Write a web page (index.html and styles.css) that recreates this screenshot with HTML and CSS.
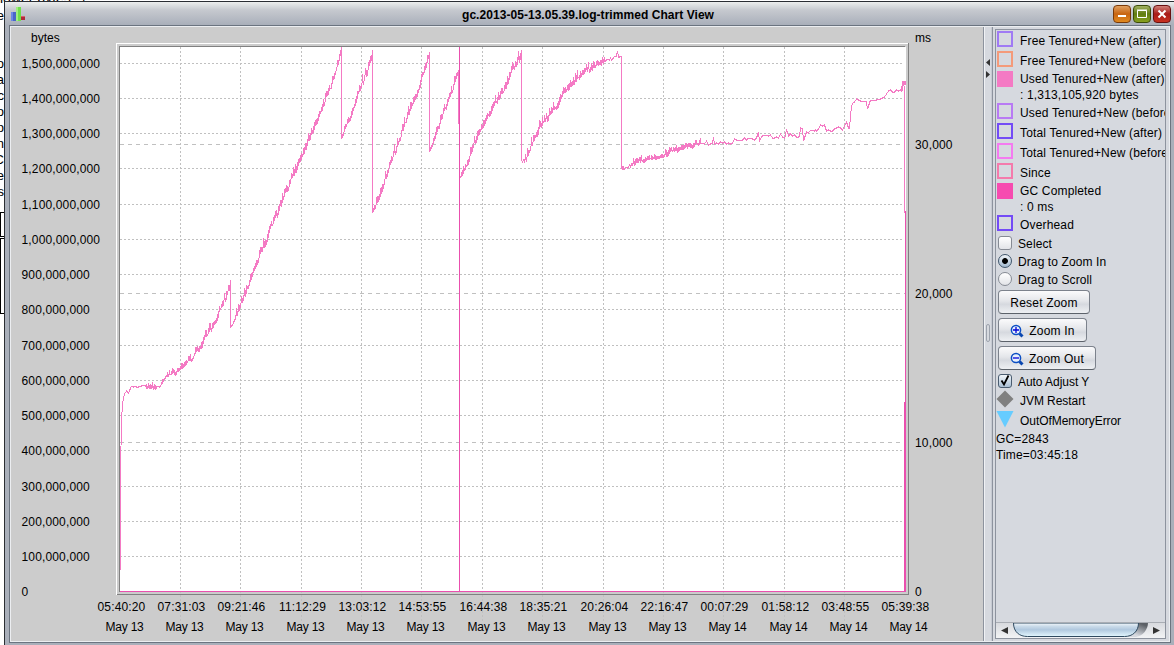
FILE: index.html
```
<!DOCTYPE html>
<html lang="en">
  <head>
    <meta charset="UTF-8">
    <title>gc.2013-05-13.05.39.log-trimmed Chart View</title>
    <link rel="stylesheet" href="styles.css">
  </head>
  <body>
    <div class="desktop">
      <div class="behind">
        <div class="behind-top">lower bytes.&nbsp; /</div>
        <div class="behind-lines">
          <span>e</span><span></span><span></span><span>o</span><span>a</span><span>c</span><span>o</span><span>p</span><span>in</span><span>C</span><span>e</span><span>s</span>
        </div>
        <div class="behind-box small"></div>
        <div class="behind-box"></div>
      </div>

      <div class="window">
        <div class="titlebar">
          <svg class="app-icon" width="16" height="16" viewBox="0 0 16 16">
            <rect x="1" y="6" width="5" height="9" fill="#4a66c8"/>
            <rect x="1" y="6" width="2" height="9" fill="#6d88e6"/>
            <rect x="6" y="1" width="5" height="14" fill="#6fe04c"/>
            <rect x="6" y="1" width="2" height="14" fill="#a0f080"/>
            <rect x="6" y="0" width="4" height="1" fill="#d9e6d4"/>
            <rect x="11" y="10" width="4" height="4" fill="#b02a3c"/>
            <rect x="11" y="10" width="4" height="1" fill="#d8606c"/>
          </svg>
          <span class="title">gc.2013-05-13.05.39.log-trimmed Chart View</span>
          <div class="window-buttons">
            <button class="win-btn minimize"><svg width="18" height="18"><rect x="5" y="10" width="8" height="2" fill="#fff"/></svg></button>
            <button class="win-btn maximize"><svg width="18" height="18"><path d="M4.500 5.500h9v7h-9z M4 5h10" fill="none" stroke="#fff"/></svg></button>
            <button class="win-btn close"><svg width="18" height="18"><path d="M5.500 5.500l7 7M12.500 5.500l-7 7" stroke="#fff" stroke-width="2"/></svg></button>
          </div>
        </div>

        <div class="content">
          <svg id="chart" class="chart" width="972" height="614" viewBox="11 27 972 614"></svg>

          <div class="splitter">
            <svg width="7" height="22"><path d="M5 1v7L1 4.500z M1 13v7l4-3.500z" fill="#333"/></svg>
            <span class="grip"></span>
          </div>

          <div class="sidebar">
            <div class="legend">
              <div class="row"><i class="swatch violet"></i><span>Free Tenured+New (after)</span></div>
              <div class="row"><i class="swatch salmon"></i><span>Free Tenured+New (before)</span></div>
              <div class="row tall"><i class="swatch used"></i><span>Used Tenured+New (after)<br>: 1,313,105,920 bytes</span></div>
              <div class="row"><i class="swatch purple"></i><span>Used Tenured+New (before)</span></div>
              <div class="row"><i class="swatch indigo"></i><span>Total Tenured+New (after)</span></div>
              <div class="row"><i class="swatch magenta"></i><span>Total Tenured+New (before)</span></div>
              <div class="row"><i class="swatch rose"></i><span>Since</span></div>
              <div class="row tall"><i class="swatch completed"></i><span>GC Completed<br>: 0 ms</span></div>
              <div class="row"><i class="swatch indigo"></i><span>Overhead</span></div>

              <div class="option"><i class="check"></i><span>Select</span></div>
              <div class="option"><i class="radio on"></i><span>Drag to Zoom In</span></div>
              <div class="option"><i class="radio"></i><span>Drag to Scroll</span></div>

              <div class="buttons">
                <button class="btn reset">Reset Zoom</button>
                <button class="btn zoom-in">
                  <svg width="14" height="14"><path d="M9.500 9.500l3 3" stroke="#0b47b0" stroke-width="3"/><circle cx="6" cy="6" r="4.600" fill="#e8f0fc" stroke="#0b4fc4" stroke-width="1.500"/><path d="M3 6h6M6 3v6" stroke="#0000d8" stroke-width="1.300"/></svg>
                  Zoom In
                </button>
                <button class="btn zoom-out">
                  <svg width="14" height="14"><path d="M9.500 9.500l3 3" stroke="#0b47b0" stroke-width="3"/><circle cx="6" cy="6" r="4.600" fill="#e8f0fc" stroke="#0b4fc4" stroke-width="1.500"/><path d="M3 6h6" stroke="#0000d8" stroke-width="1.300"/></svg>
                  Zoom Out
                </button>
              </div>

              <div class="option tight"><i class="check on"><svg width="14" height="14"><path d="M3.500 6.500l2.500 4 4.500-9" fill="none" stroke="#000" stroke-width="1.800"/></svg></i><span>Auto Adjust Y</span></div>
              <div class="row marker"><svg width="18" height="18"><path d="M9 0.500l8.500 8.500-8.500 8.500L0.500 9z" fill="#808080"/></svg><span>JVM Restart</span></div>
              <div class="row marker"><svg width="18" height="18"><path d="M0.500 1h17L9 17.500z" fill="#66ccff"/></svg><span>OutOfMemoryError</span></div>
              <div class="stat">GC=2843</div>
              <div class="stat">Time=03:45:18</div>
            </div>

            <div class="scrollbar">
              <svg width="169" height="15">
                <defs>
                  <linearGradient id="thumb" x1="0" y1="0" x2="0" y2="1">
                    <stop offset="0" stop-color="#f4f8fb"/>
                    <stop offset="0.250" stop-color="#c9dae9"/>
                    <stop offset="0.500" stop-color="#b0c8de"/>
                    <stop offset="1" stop-color="#e4f8ff"/>
                  </linearGradient>
                  <linearGradient id="shade" x1="0" y1="1" x2="0.600" y2="0">
                    <stop offset="0.300" stop-color="#d6d9df"/>
                    <stop offset="1" stop-color="#5c6066"/>
                  </linearGradient>
                </defs>
                <path d="M134 0h18c0 6-5 13-12 14h-10z" fill="url(#shade)"/>
                <path d="M17.500 0c0 9 6 13.500 14 13.500h97c8 0 14-5 14-13.500z" fill="url(#thumb)" stroke="#2f4a60"/>
                <path d="M12 4v7L5 7.500z M157 4v7l7-3.500z" fill="#333"/>
              </svg>
            </div>
          </div>
        </div>
      </div>
    </div>
    <script src="chart.js"></script>
  </body>
</html>
```

FILE: styles.css
```
:root {
  --panel: #d6d9df;
  --chart-bg: #cccccc;
  --used: #f47ac4;
  --gc: #f64bb0;
}

* {
  box-sizing: border-box;
}

body {
  margin: 0;
  font-family: "Liberation Sans", Arial, sans-serif;
  font-size: 12px;
  color: #000;
  background: #fff;
  overflow: hidden;
}

.desktop {
  position: relative;
  width: 1174px;
  height: 645px;
  padding: 1px 0 0 4px;
  overflow: hidden;
}

/* document lying behind the window */
.behind {
  position: absolute;
  left: 0;
  top: 0;
  width: 90px;
  height: 645px;
  overflow: hidden;
}

.behind-top {
  height: 8px;
  line-height: 12px;
  margin-top: -8px;
  font-size: 14px;
}

.behind-lines {
  width: 4px;
  margin-top: 8px;
  display: flex;
  flex-direction: column;
  align-items: flex-end;
  font-size: 13px;
}

.behind-lines span {
  height: 16px;
  line-height: 16px;
}

.behind-box {
  width: 20px;
  height: 76px;
  border: 1px solid #000;
}

.behind-box.small {
  height: 25px;
  margin: 12px 0 1px;
}

.window {
  position: relative;
  width: 1172px;
  height: 646px;
  border: 1px solid #2b2e33;
  background: #a9afba;
}

.titlebar {
  display: flex;
  align-items: center;
  height: 23px;
  padding: 0 4px 0 5px;
  background: linear-gradient(#eceeed, #c6c9cf 35%, #a9afba);
}

.title {
  flex: 1;
  text-align: center;
  font-weight: bold;
  letter-spacing: 0.05px;
  padding: 2px 0 0 37px;
}

.window-buttons {
  display: flex;
  gap: 2px;
}

.win-btn {
  width: 18px;
  height: 18px;
  padding: 0;
  border: 1px solid #444;
  border-radius: 4px;
}

.win-btn svg {
  display: block;
  margin: -1px;
}

.minimize {
  border-color: #7a3a08;
  background: linear-gradient(#e0a060, #c86410 50%, #e08a20);
}

.maximize {
  border-color: #3c4c08;
  background: linear-gradient(#a0b060, #607c10 50%, #88a020);
}

.close {
  border-color: #681010;
  background: linear-gradient(#d08078, #a81c18 50%, #c83020);
}

.content {
  display: flex;
  width: 1162px;
  height: 618px;
  margin-left: 4px;
  border: 1px solid #6b7480;
  box-shadow: inset 1px 1px #eceef1, inset -1px -1px #eceef1;
  padding: 1px;
  background: var(--panel);
}

.chart {
  flex: none;
  display: block;
  background: var(--chart-bg);
}

.chart text {
  font-size: 12px;
}

.chart .tick {
  letter-spacing: 0.15px;
}

.grid-line {
  stroke: #c0c0c0;
  stroke-dasharray: 2 2;
}

.grid-line.right {
  stroke-dasharray: 4 4;
}

.series {
  fill: none;
  stroke: var(--used);
}

.gc {
  fill: none;
  stroke: #ea4fae;
}

.splitter {
  width: 10px;
  flex: none;
  display: flex;
  flex-direction: column;
  align-items: center;
  border-left: 1px solid #8d939e;
  border-right: 1px solid #8d939e;
  box-shadow: inset 1px 0 #f0f2f5, inset -1px 0 #c6cad2;
  padding-top: 31px;
}

.splitter svg {
  display: block;
}

.grip {
  width: 4px;
  height: 18px;
  margin-top: 244px;
  border: 1px solid #9da3ad;
  border-radius: 2px;
}

.sidebar {
  width: 171px;
  height: 610px;
  margin: 2px 0 0 2px;
  border: 1px solid #8d939e;
  display: flex;
  flex-direction: column;
}

.legend {
  flex: 1;
  overflow: hidden;
  white-space: nowrap;
  letter-spacing: 0.16px;
}

.row {
  display: flex;
  height: 20px;
  gap: 7px;
  padding: 1px 0 0 1px;
  line-height: 20px;
}

.row.tall {
  height: 32px;
  line-height: 16px;
}

.swatch {
  flex: none;
  width: 16px;
  height: 16px;
  border: 2px solid;
}

.violet { border-color: #9f7af4; }
.salmon { border-color: #f49a7a; }
.purple { border-color: #b87af4; }
.indigo { border-color: #734bf6; }
.magenta { border-color: #f47af0; }
.rose { border-color: #f47aac; }
.used { border-color: var(--used); background: var(--used); }
.completed { border-color: var(--gc); background: var(--gc); }

.option {
  display: flex;
  align-items: center;
  height: 18px;
  gap: 6px;
  padding-left: 2px;
  letter-spacing: 0.1px;
}

.option span {
  padding-top: 2px;
}

.option.tight {
  letter-spacing: -0.05px;
}

.check,
.radio {
  width: 14px;
  height: 14px;
  border: 1px solid #868b94;
  border-radius: 3px;
  background: linear-gradient(#fff, #e2e4e8);
}

.radio {
  border-radius: 50%;
}

.check.on {
  border-color: #4a5c70;
  background: linear-gradient(#f2f6fa, #a9bfd4);
}

.check svg {
  display: block;
  margin: -1px;
}

.radio.on {
  border-color: #40566c;
  background: radial-gradient(circle, #000 0 2.5px, transparent 3.3px), linear-gradient(#f0f4f8, #a3bad0);
}

.buttons {
  display: flex;
  flex-direction: column;
  gap: 4px;
  padding: 2px 0 2px 2px;
}

.btn {
  display: flex;
  align-items: center;
  justify-content: center;
  gap: 5px;
  height: 24px;
  padding: 2px 0 0;
  border: 1px solid #7c828c;
  border-radius: 4px;
  border-bottom-color: #5c626a;
  background: linear-gradient(#fbfbfc, #e4e6ea 45%, #d6d9df 60%, #eef0f3);
  font: inherit;
  letter-spacing: 0.2px;
  color: #000;
}

.reset { width: 92px; }
.zoom-in { width: 89px; }
.zoom-out { width: 98px; }

.row.marker {
  padding: 0;
  gap: 6px;
  line-height: 22px;
  letter-spacing: -0.06px;
}

.stat {
  height: 16px;
  line-height: 18px;
}

.scrollbar {
  height: 16px;
  border-top: 1px solid #a9adb4;
  background: linear-gradient(#d8dade, #f2f3f5);
}

.scrollbar svg {
  display: block;
}
```

FILE: chart.js
```
const NS = 'http://www.w3.org/2000/svg';
const chart = document.getElementById('chart');

function add(name, attrs, text) {
  const el = document.createElementNS(NS, name);
  for (const key in attrs) el.setAttribute(key, attrs[key]);
  if (text !== undefined) el.textContent = text;
  chart.appendChild(el);
}

function line(x1, y1, x2, y2, cls) {
  add('path', { d: `M${x1} ${y1}L${x2} ${y2}`, class: cls, 'shape-rendering': 'crispEdges' });
}

function rect(x, y, width, height, fill) {
  add('rect', { x, y, width, height, fill });
}

// bevelled plot frame
rect(116, 43, 792, 1, '#fff');
rect(116, 43, 1, 552, '#fff');
rect(908, 43, 1, 552, '#808080');
rect(117, 594, 792, 1, '#808080');
rect(119, 46, 786, 1, '#808080');
rect(119, 46, 1, 546, '#808080');
rect(120, 47, 786, 545, '#fff');

// left axis
for (let i = 0; i <= 15; i++) {
  const y = Math.floor(591.7 - i * 35.23);
  if (i > 0) line(120, y + 0.5, 904, y + 0.5, 'grid-line');
  add('text', { x: 21.5, y: y + 4.5, class: 'tick' }, (i * 100000000).toLocaleString('en-US'));
}

// right axis
for (let i = 0; i <= 3; i++) {
  const y = Math.floor(591.5 - i * 149);
  if (i > 0) line(120, y + 0.5, 905, y + 0.5, 'grid-line right');
  add('text', { x: 915, y: y + 4.5, class: 'tick' }, (i * 10000).toLocaleString('en-US'));
}

// time axis
const times = ['05:40:20', '07:31:03', '09:21:46', '11:12:29', '13:03:12', '14:53:55', '16:44:38',
  '18:35:21', '20:26:04', '22:16:47', '00:07:29', '01:58:12', '03:48:55', '05:39:38'];
times.forEach((time, i) => {
  const x = Math.floor(120 + i * 60.38);
  if (i > 0 && i < 13) line(x + 0.5, 47, x + 0.5, 622, 'grid-line');
  add('text', { x: x + 1.5, y: 611, 'text-anchor': 'middle', class: 'tick' }, time);
  add('text', { x: x + 4.5, y: 631, 'text-anchor': 'middle', 'letter-spacing': -0.2 }, i < 10 ? 'May 13' : 'May 14');
});

add('text', { x: 31, y: 42 }, 'bytes');
add('text', { x: 915, y: 42 }, 'ms');

// used memory: [x, y, jitter up to the next point]
const points = [
  [120, 570, 0], [120, 470, 0], [121, 422, 0], [122, 403, 0], [124, 394, 0], [126, 391, 0], [128, 393, 0],
  [131, 386, 0.5], [138, 387, 0.5], [143, 385, 0], [145, 386, 3], [156, 387, 2], [160, 386, 3],
  [163, 381, 2], [166, 375, 3], [170, 374, 3], [176, 373, 3], [187, 362, 4], [193, 357, 4],
  [200, 347, 5], [207, 335, 5], [214, 322, 5], [220, 309, 5], [227, 293, 3], [229, 290, 0],
  [230, 280, 0], [230, 327, 2], [234, 320, 5], [240, 305, 5], [247, 287, 5], [252, 274, 5],
  [272, 225, 5], [290, 182, 5], [302, 155, 5], [320, 112, 5], [330, 88, 5], [335, 72, 4],
  [340, 54, 2], [341, 47, 0], [341, 138, 3], [346, 126, 5], [353, 108, 5], [358, 91, 5],
  [364, 78, 5], [371, 60, 2], [372, 50, 0], [372, 213, 4], [375, 208, 5], [384, 182, 5],
  [392, 160, 5], [399, 139, 5], [405, 122, 5], [412, 103, 5], [418, 90, 5], [423, 74, 4],
  [428, 58, 1], [429, 52, 0], [429, 152, 3], [432, 145, 5], [438, 127, 5], [445, 108, 5],
  [452, 92, 5], [458, 72, 0], [458, 70, 0], [459, 176, 0], [460, 177, 4], [466, 165, 5], [473, 145, 5],
  [480, 130, 5], [488, 115, 5], [496, 102, 5], [503, 92, 5], [510, 75, 5], [520, 57, 1],
  [521, 50, 0], [521, 160, 2], [524, 162, 5], [529, 150, 5], [535, 136, 5], [543, 122, 5],
  [555, 108, 5], [566, 91, 5], [578, 77, 4], [585, 70, 4], [595, 67, 4], [605, 61, 2],
  [616, 56, 0], [617, 51, 0], [618, 57, 1], [621, 56, 0], [621, 168, 3], [624, 169, 2],
  [632, 165, 4], [642, 161, 3], [650, 158, 2.5], [664, 156, 4], [672, 151, 3], [697, 144, 3],
  [712, 143, 3], [713, 137, 0], [714, 144, 3], [740, 140, 3], [756, 138, 3], [758, 132, 0],
  [759, 141, 0], [761, 137, 3], [785, 136, 0], [786, 129, 0], [788, 136, 3], [799, 136, 0],
  [800, 128, 0], [802, 129, 0], [803, 141, 0], [806, 132, 2], [815, 130, 3], [824, 125, 0],
  [826, 131, 2.5], [843, 128, 0], [846, 122, 0], [848, 128, 0], [849, 128, 0], [851, 106, 2],
  [853, 102, 2], [856, 99, 1], [866, 102, 0], [867, 109, 0], [870, 100, 3], [882, 98, 3],
  [888, 91, 2], [901, 91, 0], [902, 82, 0], [902, 91, 0], [903, 82, 0], [904, 90, 0], [904, 213, 0]
];

let seed = 7;
function random() {
  seed = (seed * 16807) % 2147483647;
  return seed / 2147483647 - 0.5;
}

let d = '';
points.forEach(([x, y, jitter], i) => {
  d += `${i ? 'L' : 'M'}${x + 0.5} ${y}`;
  const next = points[i + 1];
  if (!next || !jitter) return;
  for (let px = x + 1; px < next[0]; px += 1) {
    const sparse = px > 700;
    if (sparse && px % 2) continue;
    const py = y + (next[1] - y) * (px - x) / (next[0] - x);
    const a = Math.round(py + random() * jitter * 1.5);
    d += `L${px + 0.5} ${a}`;
    if (jitter > 2.4 && !sparse) d += `V${a - Math.round(jitter * (0.9 + random() * 0.8))}V${a + 1}`;
  }
});
add('path', { d, class: 'series', 'shape-rendering': 'crispEdges' });
rect(902, 81, 4, 4, '#f47ac4');

line(120, 591.5, 906, 591.5, 'gc');
line(459.5, 47, 459.5, 592, 'gc');
line(905.5, 211, 905.5, 592, 'gc');
line(904.5, 402, 904.5, 592, 'gc');
```
